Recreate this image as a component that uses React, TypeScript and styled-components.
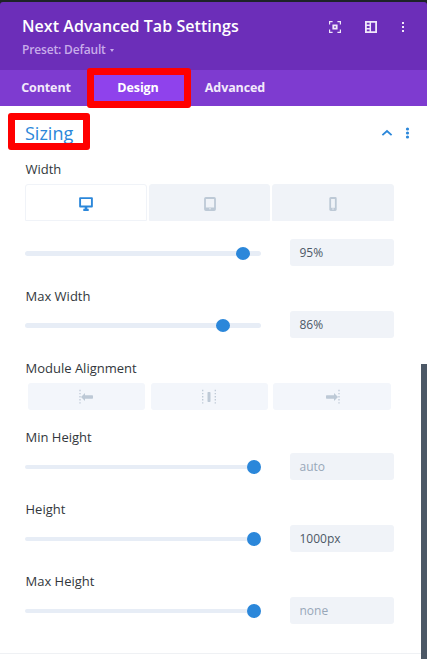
import React from "react";
import styled, { createGlobalStyle } from "styled-components";

const GlobalStyle = createGlobalStyle`
  * { box-sizing: border-box; }
  body {
    margin: 0;
    background: #fff;
    font-family: "Open Sans", "Noto Sans", sans-serif;
    overflow: hidden;
  }
`;

const Panel = styled.div`
  position: relative;
  width: 427px;
  height: 659px;
  overflow: hidden;
  background: #1d2327;
  padding-top: 2px;
`;

const Header = styled.header`
  display: flex;
  justify-content: space-between;
  height: 68px;
  padding: 13px 22px 0 22px;
  background: #6c2eb9;
  border-radius: 3px 3px 0 0;
`;

const Title = styled.h1`
  margin: 0;
  font-size: 16px;
  line-height: 23px;
  font-weight: 600;
  letter-spacing: 0.06px;
  color: #fff;
  white-space: nowrap;
`;

const Preset = styled.div`
  display: flex;
  align-items: center;
  gap: 4px;
  margin-top: 3px;
  font-size: 12px;
  line-height: 18px;
  font-weight: 600;
  letter-spacing: -0.16px;
  color: #c8acea;
`;

const HeaderActions = styled.div`
  display: flex;
  align-items: center;
  height: 24px;
  color: #f0e8fa;
`;

const ActionIcon = styled.svg<{ $gap?: number }>`
  display: block;
  margin-left: ${(p) => p.$gap ?? 0}px;
`;

const TabBar = styled.nav`
  display: flex;
  height: 36px;
  background: #7e3bd0;
`;

const Tab = styled.div<{ $width: number; $active?: boolean }>`
  display: flex;
  align-items: center;
  justify-content: center;
  width: ${(p) => p.$width}px;
  padding-bottom: 2px;
  background: ${(p) => (p.$active ? "#8f42ec" : "transparent")};
  color: ${(p) => (p.$active ? "#fff" : "#f2e9fb")};
  font-size: 12.5px;
  font-weight: 700;
  letter-spacing: -0.1px;
`;

const Highlight = styled.div<{ $x: number; $y: number; $w: number; $h: number }>`
  position: absolute;
  left: ${(p) => p.$x}px;
  top: ${(p) => p.$y}px;
  width: ${(p) => p.$w}px;
  height: ${(p) => p.$h}px;
  border: 7px solid #ff0000;
  border-radius: 3px;
`;

const Body = styled.main`
  display: flex;
  height: 553px;
  background: #fff;
`;

const Settings = styled.div`
  flex: 1;
`;

const ScrollTrack = styled.div`
  width: 6px;
  padding-top: 258px;
`;

const ScrollThumb = styled.div`
  height: 100%;
  background: #4c5866;
`;

const Section = styled.section`
  height: 548px;
  padding: 0 27px 0 25px;
  border-bottom: 1px solid #eff1f4;
`;

const SectionHeader = styled.div`
  display: flex;
  align-items: center;
  height: 54px;
`;

const SectionTitle = styled.h2`
  flex: 1;
  margin: 0;
  font-size: 18px;
  font-weight: 400;
  line-height: 26px;
  color: #2b87da;
`;

const SectionIcons = styled.div`
  display: flex;
  margin-right: -26px;
`;

const Field = styled.div<{ $top?: number; $gap?: number }>`
  display: flex;
  flex-direction: column;
  gap: ${(p) => p.$gap ?? 6}px;
  margin-top: ${(p) => p.$top ?? 0}px;
`;

const Label = styled.label`
  height: 18px;
  padding-left: 0.5px;
  line-height: 18px;
  font-size: 13px;
  font-weight: 500;
  color: #32373c;
`;

const DeviceTabs = styled.div`
  display: grid;
  grid-template-columns: 122px 121px 122px;
  gap: 2px;
  height: 37px;
  margin-bottom: 12px;
`;

const DeviceTab = styled.div<{ $active?: boolean }>`
  display: flex;
  align-items: center;
  justify-content: center;
  padding-top: 3px;
  border: 1px solid #f0f3f8;
  border-radius: 3px 3px 0 0;
  background: ${(p) => (p.$active ? "#fff" : "#f0f3f8")};
`;

const Control = styled.div`
  display: flex;
  align-items: center;
  justify-content: space-between;
  height: 27px;
`;

const Track = styled.div<{ $thick: number }>`
  position: relative;
  width: 236px;
  height: ${(p) => p.$thick}px;
  margin-top: ${(p) => (p.$thick === 5 ? 2 : 1)}px;
  border-radius: 3px;
  background: #e7edf6;
`;

const Knob = styled.div<{ $thick: number }>`
  position: absolute;
  top: ${(p) => (p.$thick === 5 ? -4 : -5)}px;
  width: 14px;
  height: ${(p) => (p.$thick === 5 ? 13 : 14)}px;
  border-radius: 50%;
  background: #2b87da;
`;

const Value = styled.div<{ $placeholder?: boolean }>`
  width: 104px;
  height: 27px;
  padding: 0 9.5px;
  border-radius: 3px;
  background: #f0f3f8;
  color: ${(p) => (p.$placeholder ? "#98a7b8" : "#4c5866")};
  font-size: 12px;
  font-weight: 500;
  line-height: 28px;
`;

const AlignButtons = styled.div`
  display: grid;
  grid-template-columns: 117px 117px 118px;
  column-gap: 5.5px;
  height: 27px;
  padding-left: 3px;
`;

const AlignButton = styled.div`
  display: flex;
  align-items: center;
  justify-content: center;
  padding-top: 1px;
  border-radius: 3px;
  background: #f3f6fb;
`;

type SliderProps = { at: number; value: string; placeholder?: boolean; thick?: number };

function Slider({ at, value, placeholder, thick = 4 }: SliderProps) {
  return (
    <Control>
      <Track $thick={thick}>
        <Knob $thick={thick} style={{ left: at }} />
      </Track>
      <Value $placeholder={placeholder}>{value}</Value>
    </Control>
  );
}

function DottedLine({ x }: { x: number }) {
  return <path d={`M${x} .8V15`} stroke="#bdc9d6" strokeWidth="1.3" strokeDasharray="1.4 1.7" />;
}

export default function App() {
  return (
    <>
      <GlobalStyle />
      <Panel>
        <Header>
          <div>
            <Title>Next Advanced Tab Settings</Title>
            <Preset>
              Preset: Default
              <svg width="4" height="3" viewBox="0 0 4 3"><path d="M0 0h4L2 3z" fill="currentColor" /></svg>
            </Preset>
          </div>
          <HeaderActions>
            <ActionIcon width="12" height="12" viewBox="0 0 12 12" fill="none" stroke="currentColor">
              <path d="M.6 3.5V.6h3M8.4.6h3v2.9M11.4 8.5v2.9h-3M3.6 11.4h-3V8.5" strokeWidth="1.2" />
              <path d="M4.3 4.3h3.4v3.4H4.3z" strokeWidth="1.8" />
            </ActionIcon>
            <ActionIcon $gap={24} width="12" height="12" viewBox="0 0 12 12" fill="none" stroke="currentColor">
              <path d="M.9.9h10.2v10.2H.9z" strokeWidth="1.8" />
              <path d="M5.3 1v10M1 4.2h4M1 7.7h4" strokeWidth="1.5" />
            </ActionIcon>
            <ActionIcon $gap={24} width="4" height="12" viewBox="0 0 4 12" fill="currentColor">
              <path d="M1 1h2v2H1zM1 5h2v2H1zM1 9h2v2H1z" />
            </ActionIcon>
          </HeaderActions>
        </Header>
        <TabBar>
          <Tab $width={92}>Content</Tab>
          <Tab $width={92} $active>Design</Tab>
          <Tab $width={102}>Advanced</Tab>
        </TabBar>
        <Body>
          <Settings>
            <Section>
              <SectionHeader>
                <SectionTitle>Sizing</SectionTitle>
                <SectionIcons>
                  <svg width="12" height="12" viewBox="0 0 12 12" fill="none"><path d="M1.4 8.2L6 4l4.6 4.2" stroke="#2b87da" strokeWidth="1.8" /></svg>
                  <svg width="27" height="12" viewBox="0 0 27 12" fill="#2b87da"><circle cx="14.5" cy="2" r="1.6" /><circle cx="14.5" cy="6" r="1.6" /><circle cx="14.5" cy="10" r="1.6" /></svg>
                </SectionIcons>
              </SectionHeader>
              <Field>
                <Label>Width</Label>
                <DeviceTabs>
                  <DeviceTab $active>
                    <svg width="14" height="14" viewBox="0 0 14 14" fill="none">
                      <path d="M1.1 1.1h11.8v8.4H1.1z" stroke="#2b87da" strokeWidth="1.9" strokeLinejoin="round" />
                      <path d="M5.7 9.4h2.6v2.4h1.4V14H4.3v-2.2h1.4z" fill="#2b87da" />
                    </svg>
                  </DeviceTab>
                  <DeviceTab>
                    <svg width="12" height="14" viewBox="0 0 12 14" fill="none">
                      <rect x="1" y="1" width="10" height="12" rx=".8" stroke="#bdc9d6" strokeWidth="1.8" />
                      <path d="M1 10.5h10V13H1z" fill="#bdc9d6" /><circle cx="6" cy="11.8" r=".7" fill="#f0f3f8" />
                    </svg>
                  </DeviceTab>
                  <DeviceTab>
                    <svg width="8" height="14" viewBox="0 0 8 14" fill="none">
                      <rect x="1.2" y="1" width="5.6" height="12" rx=".5" stroke="#bdc9d6" strokeWidth="1.8" />
                      <path d="M1 10.8h6V13H1z" fill="#bdc9d6" /><circle cx="4" cy="12" r=".7" fill="#f0f3f8" />
                    </svg>
                  </DeviceTab>
                </DeviceTabs>
                <Slider at={211} value="95%" thick={5} />
              </Field>
              <Field $top={21}>
                <Label>Max Width</Label>
                <Slider at={191} value="86%" thick={5} />
              </Field>
              <Field $top={21}>
                <Label>Module Alignment</Label>
                <AlignButtons>
                  <AlignButton>
                    <svg width="15" height="16" viewBox="0 0 15 16" fill="#bdc9d6">
                      <DottedLine x={1} /><path d="M2 8l4-4v2.3h7.3a.7.7 0 01.7.7v2a.7.7 0 01-.7.7H6V12z" />
                    </svg>
                  </AlignButton>
                  <AlignButton>
                    <svg width="14" height="16" viewBox="0 0 14 16" fill="#bdc9d6">
                      <DottedLine x={.7} /><rect x="5.5" y="3" width="3" height="10" rx=".7" /><DottedLine x={13.3} />
                    </svg>
                  </AlignButton>
                  <AlignButton>
                    <svg width="15" height="16" viewBox="0 0 15 16" fill="#bdc9d6">
                      <DottedLine x={14} /><path d="M13 8L9 4v2.3H1.7A.7.7 0 001 7v2a.7.7 0 00.7.7H9V12z" />
                    </svg>
                  </AlignButton>
                </AlignButtons>
              </Field>
              <Field $top={18} $gap={7}>
                <Label>Min Height</Label>
                <Slider at={222} value="auto" placeholder />
              </Field>
              <Field $top={20} $gap={7}>
                <Label>Height</Label>
                <Slider at={222} value="1000px" />
              </Field>
              <Field $top={20} $gap={7}>
                <Label>Max Height</Label>
                <Slider at={222} value="none" placeholder />
              </Field>
            </Section>
          </Settings>
          <ScrollTrack><ScrollThumb /></ScrollTrack>
        </Body>
        <Highlight $x={87} $y={68} $w={104} $h={40} />
        <Highlight $x={8} $y={113} $w={82} $h={37} />
      </Panel>
    </>
  );
}
